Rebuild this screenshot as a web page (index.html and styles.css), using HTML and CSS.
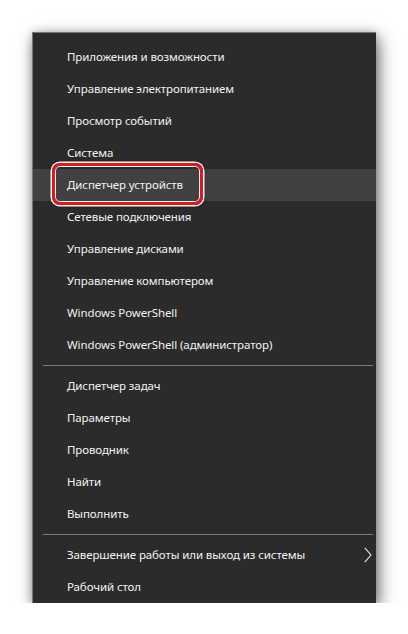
FILE: index.html
```html
<!DOCTYPE html>
<html lang="ru">
<head>
<meta charset="utf-8">
<title>Win+X</title>
<link rel="stylesheet" href="styles.css">
</head>
<body>
<div class="menu">
  <ul class="group">
    <li class="item">Приложения и возможности</li>
    <li class="item">Управление электропитанием</li>
    <li class="item">Просмотр событий</li>
    <li class="item">Система</li>
    <li class="item active">Диспетчер устройств<span class="mark"></span></li>
    <li class="item">Сетевые подключения</li>
    <li class="item">Управление дисками</li>
    <li class="item">Управление компьютером</li>
    <li class="item">Windows PowerShell</li>
    <li class="item">Windows PowerShell (администратор)</li>
  </ul>
  <div class="sep"></div>
  <ul class="group">
    <li class="item">Диспетчер задач</li>
    <li class="item">Параметры</li>
    <li class="item">Проводник</li>
    <li class="item">Найти</li>
    <li class="item">Выполнить</li>
  </ul>
  <div class="sep"></div>
  <ul class="group">
    <li class="item sub">Завершение работы или выход из системы
      <svg class="chev" width="8" height="16" viewBox="0 0 8 16"><polyline points="0.8,0.8 7,8 0.8,15.2" fill="none" stroke="#e8e8e8" stroke-width="1.1"/></svg>
    </li>
    <li class="item">Рабочий стол</li>
  </ul>
</div>
</body>
</html>
```
FILE: styles.css
```css
html, body {
  margin: 0;
  padding: 0;
  background: #ffffff;
}
body {
  padding: 32px 0 0 32px;
  font-family: "Noto Sans", "Open Sans", "DejaVu Sans", sans-serif;
}
.menu {
  width: 343px;
  background: #2b2b2b;
  border-top: 1px solid #777777;
  border-left: 1px solid #777777;
  padding-top: 8px;
  box-shadow: 3px 6px 16px rgba(0, 0, 0, 0.55), 0 0 8px rgba(0, 0, 0, 0.18);
}
.group {
  list-style: none;
  margin: 0;
  padding: 0;
}
.item {
  position: relative;
  height: 32px;
  line-height: 32px;
  padding-left: 34px;
  font-size: 11.5px;
  letter-spacing: -0.1px;
  color: #f2f2f2;
  white-space: nowrap;
}
.item.active {
  background: #414141;
}
.mark {
  position: absolute;
  left: 19px;
  top: -6px;
  width: 145px;
  height: 36px;
  border: 3.5px solid #e8151b;
  border-radius: 8px;
  box-shadow: 0 0 0 1.5px #ffffff, inset 0 0 0 1px #ffffff, 0 0 3px 1px rgba(0,0,0,0.4);
}
.sep {
  height: 1px;
  background: #7b7b7b;
  margin: 4px 3px 4px 10px;
}
.chev {
  position: absolute;
  right: 4px;
  top: 8px;
}
```
